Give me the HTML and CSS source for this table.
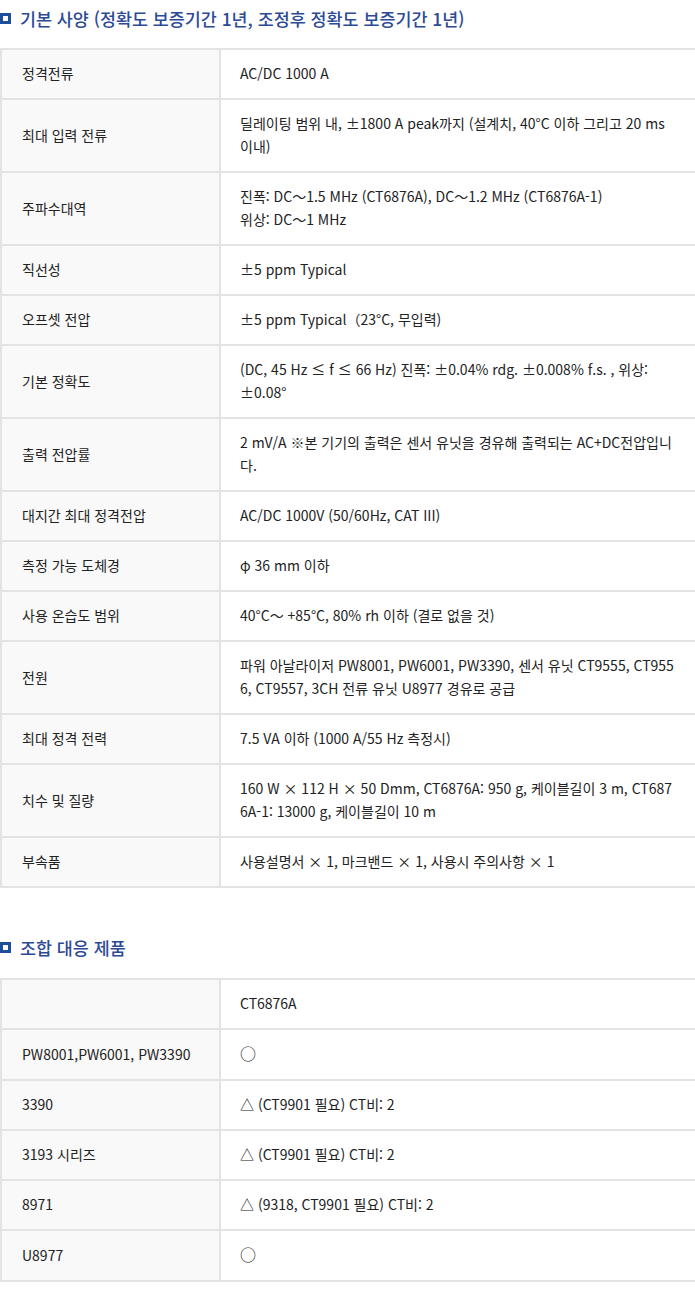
FILE: index.html
```html
<!DOCTYPE html>
<html lang="ko">
<head>
    <meta charset="UTF-8">
    <meta name="viewport" content="width=device-width, initial-scale=1.0">
    <title>CT6876A 사양</title>
    <link rel="stylesheet" href="styles.css">
</head>
<body>
    <h3 class="title"><span class="mark"></span>기본 사양 (정확도 보증기간 1년, 조정후 정확도 보증기간 1년)</h3>
    <table class="spec">
        <tr><th>정격전류</th><td>AC/DC 1000 A</td></tr>
        <tr><th>최대 입력 전류</th><td>딜레이팅 범위 내, ±1800 A peak까지 (설계치, 40°C 이하 그리고 20 ms 이내)</td></tr>
        <tr><th>주파수대역</th><td>진폭: DC～1.5 MHz (CT6876A), DC～1.2 MHz (CT6876A-1)<br>위상: DC～1 MHz</td></tr>
        <tr><th>직선성</th><td>±5 ppm Typical</td></tr>
        <tr><th>오프셋 전압</th><td>±5 ppm Typical（23°C, 무입력)</td></tr>
        <tr><th>기본 정확도</th><td>(DC, 45 Hz ≤ f ≤ 66 Hz) 진폭: ±0.04% rdg. ±0.008% f.s. , 위상: <span class="nw">±0.08°</span></td></tr>
        <tr><th>출력 전압률</th><td>2 mV/A ※본 기기의 출력은 센서 유닛을 경유해 출력되는 AC+DC전압입니다.</td></tr>
        <tr><th>대지간 최대 정격전압</th><td>AC/DC 1000V (50/60Hz, CAT III)</td></tr>
        <tr><th>측정 가능 도체경</th><td>φ 36 mm 이하</td></tr>
        <tr><th>사용 온습도 범위</th><td>40°C～ +85°C, 80% rh 이하 (결로 없을 것)</td></tr>
        <tr><th>전원</th><td>파워 아날라이저 PW8001, PW6001, PW3390, 센서 유닛 CT9555, CT9556, CT9557, 3CH 전류 유닛 U8977 경유로 공급</td></tr>
        <tr><th>최대 정격 전력</th><td>7.5 VA 이하 (1000 A/55 Hz 측정시)</td></tr>
        <tr><th>치수 및 질량</th><td>160 W × 112 H × 50 Dmm, CT6876A: 950 g, 케이블길이 3 m, CT6876A-1: 13000 g, 케이블길이 10 m</td></tr>
        <tr><th>부속품</th><td>사용설명서 × 1, 마크밴드 × 1, 사용시 주의사항 × 1</td></tr>
    </table>

    <h3 class="title second"><span class="mark"></span>조합 대응 제품</h3>
    <table class="spec">
        <tr><th></th><td>CT6876A</td></tr>
        <tr><th>PW8001,PW6001, PW3390</th><td><span class="ok">○</span></td></tr>
        <tr><th>3390</th><td>△ (CT9901 필요) CT비: 2</td></tr>
        <tr><th>3193 시리즈</th><td>△ (CT9901 필요) CT비: 2</td></tr>
        <tr><th>8971</th><td>△ (9318, CT9901 필요) CT비: 2</td></tr>
        <tr><th>U8977</th><td><span class="ok">○</span></td></tr>
    </table>
</body>
</html>
```

FILE: styles.css
```css
body {
    margin: 0;
    font-family: "Noto Sans CJK KR", "Noto Sans", sans-serif;
    color: #222;
    background: #ffffff;
}

.title {
    display: flex;
    align-items: center;
    margin: 0;
    padding-top: 5px;
    height: 26px;
    margin-bottom: 17px;
    font-size: 17.4px;
    font-weight: 500;
    color: #2c4a96;
}

.title.second {
    margin-top: 41px;
    margin-bottom: 18px;
}

.mark {
    box-sizing: border-box;
    width: 11px;
    height: 11px;
    border: 3px solid #1d4e9e;
    margin-right: 9px;
    background: #ffffff;
}

.spec {
    width: 100%;
    border-collapse: collapse;
    font-size: 14px;
    line-height: 23px;
}

.spec th,
.spec td {
    border: 2px solid #e3e3e3;
    padding: 12px 20px 13px;
    text-align: left;
    vertical-align: middle;
}

.spec th {
    width: 177px;
    font-weight: 400;
    background: #f9f9f9;
}

.spec td {
    background: #ffffff;
    border-right: none;
    padding-left: 19px;
    padding-right: 17px;
    word-break: break-all;
}

.nw {
    white-space: nowrap;
}

.ok {
    font-size: 16px;
    line-height: 23px;
}
```
